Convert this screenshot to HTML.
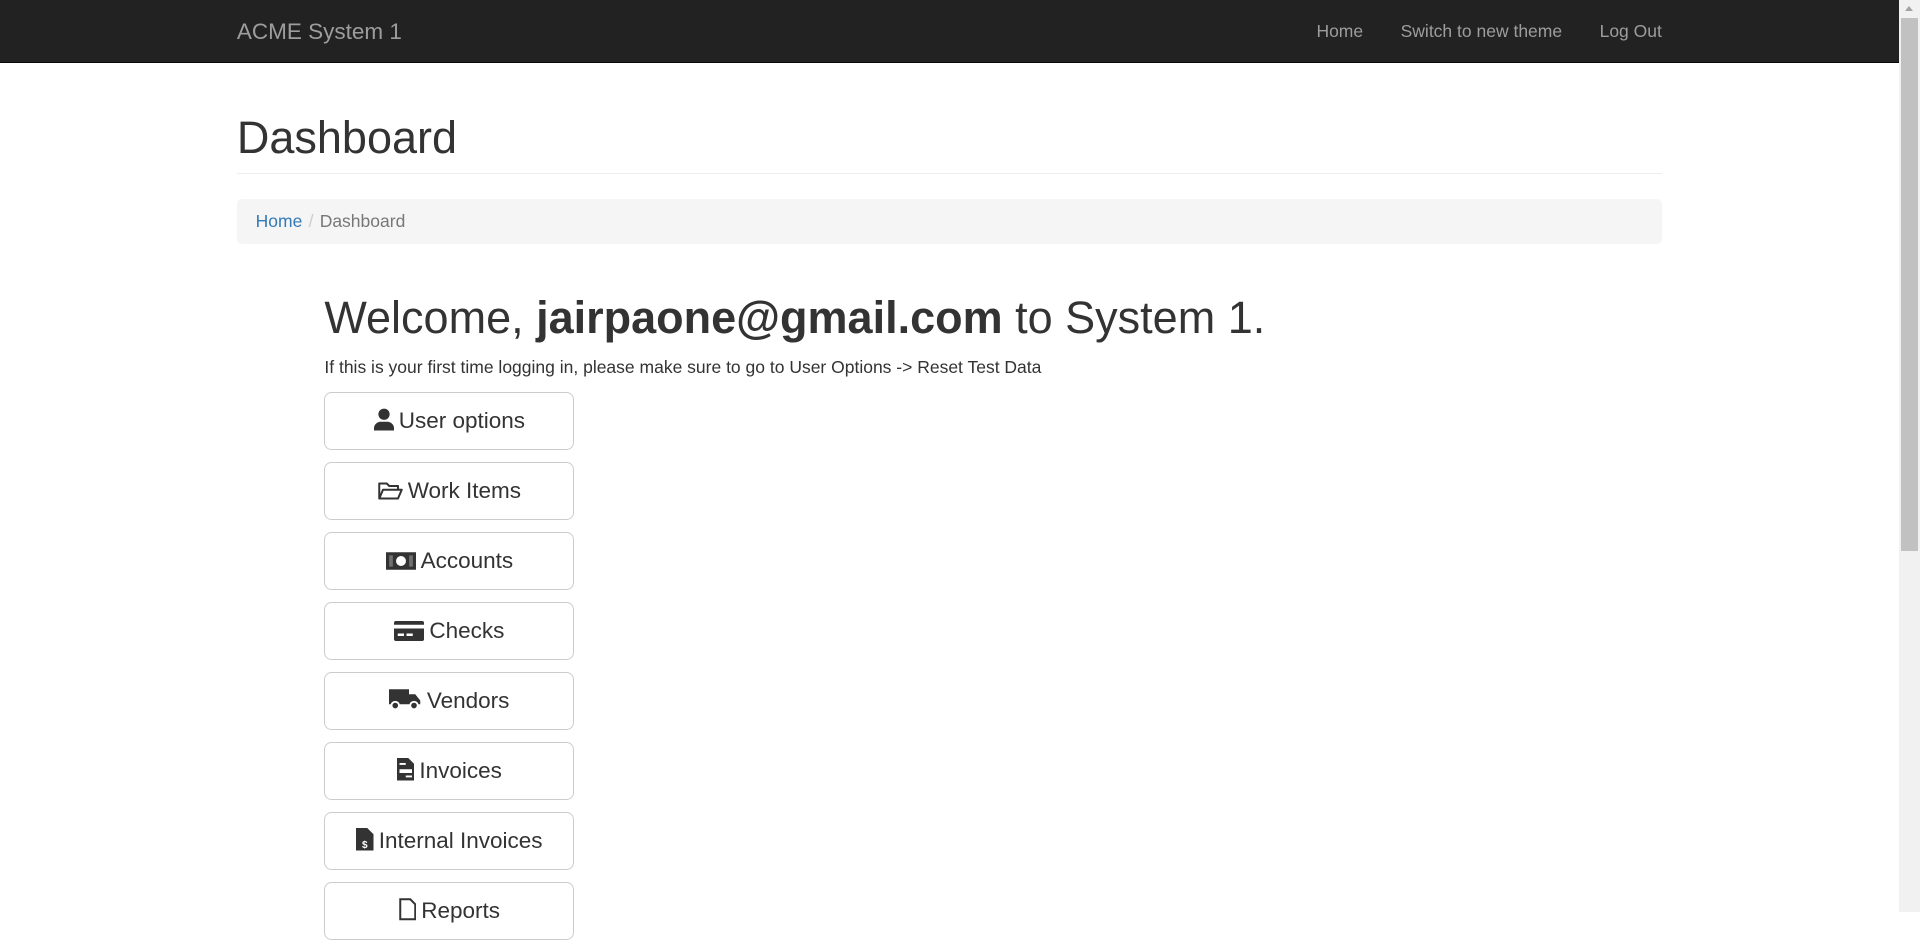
<!DOCTYPE html>
<html><head><meta charset="utf-8"><style>
html{zoom:1.25;overflow:hidden}
body{margin:0;font-family:"Liberation Sans",Arial,sans-serif;font-size:14px;line-height:1.42857;color:#333;background:#fff}
.page{width:1519px;position:relative}
.nav{height:50px;background:#222;border-bottom:1px solid #080808;box-sizing:border-box;position:relative}
.wrap{width:1140px;margin:0 auto;position:relative}
.brand{position:absolute;left:0;top:15px;font-size:18px;line-height:20px;color:#9d9d9d}
.links{position:absolute;right:0;top:15px;line-height:20px;color:#9d9d9d}
.links span{margin-left:30px}
.ph{margin:40px 0 20px;padding-bottom:9px;border-bottom:1px solid #eee}
.ph h1{margin:0;font-size:36px;font-weight:500;line-height:1.1}
.bc{background:#f5f5f5;border-radius:4px;padding:8px 15px;margin-bottom:20px}
.bc a{color:#337ab7}
.bc .s{color:#ccc;padding:0 5px}
.bc .a{color:#777}
.main{margin-left:70px}
.main h1{margin:39px 0 10px;font-size:36px;font-weight:500;line-height:1.1}
.main p{margin:0 0 10px}
.btn{width:200px;height:46px;box-sizing:border-box;border:1px solid #ccc;border-radius:6px;font-size:18px;line-height:44px;text-align:center;margin-bottom:10px;color:#333}
.btn svg{vertical-align:-2px;margin-right:4px}
.sb{position:fixed;left:1519px;top:0;width:17px;height:100%;background:#f1f1f1}
.sb .th{position:absolute;left:2px;right:2px;top:14px;height:427px;background:#c1c1c1}
.sb .ar{position:absolute;left:5px;top:5px;width:0;height:0;border-left:3.5px solid transparent;border-right:3.5px solid transparent;border-bottom:4px solid #a3a3a3}
</style></head><body>
<div class="page">
<div class="nav"><div class="wrap"><div class="brand">ACME System 1</div>
<div class="links"><span>Home</span><span>Switch to new theme</span><span>Log Out</span></div></div></div>
<div class="wrap">
<div class="ph"><h1>Dashboard</h1></div>
<div class="bc"><a>Home</a><span class="s">/</span><span class="a">Dashboard</span></div>
<div class="main">
<h1>Welcome, <b>jairpaone@gmail.com</b> to System 1.</h1>
<p>If this is your first time logging in, please make sure to go to User Options -&gt; Reset Test Data</p>
<div class="btn"><svg width="16" height="18" viewBox="0 0 16 18"><circle cx="8" cy="5" r="4.5" fill="#333"/><path d="M0 18v-2c0-3 3-5 5-5h6c2 0 5 2 5 5v2z" fill="#333"/></svg>User options</div>
<div class="btn"><svg width="20" height="16" viewBox="0 0 20 16"><path d="M1 14V2h6l2 2h7v3M1 14l3-7h15l-3 7z" fill="none" stroke="#333" stroke-width="1.6" stroke-linejoin="round"/></svg>Work Items</div>
<div class="btn"><svg width="24" height="16" viewBox="0 0 24 16"><rect x="0" y="1" width="24" height="14" fill="#333"/><circle cx="12" cy="8" r="4" fill="#fff"/><rect x="2.5" y="3.5" width="3" height="9" fill="#fff" opacity=".3"/><rect x="18.5" y="3.5" width="3" height="9" fill="#fff" opacity=".3"/></svg>Accounts</div>
<div class="btn"><svg width="24" height="16" viewBox="0 0 24 16"><rect x="0" y="0" width="24" height="16" rx="1.5" fill="#333"/><rect x="0" y="3" width="24" height="3" fill="#fff"/><rect x="3" y="10" width="5" height="2" fill="#fff"/><rect x="10" y="10" width="5" height="2" fill="#fff"/></svg>Checks</div>
<div class="btn"><svg width="26" height="18" viewBox="0 0 26 18"><path d="M0 1h16v12H0zM16 5h5l4 5v3h-9z" fill="#333"/><circle cx="5" cy="14" r="3" fill="#333" stroke="#fff" stroke-width="1.5"/><circle cx="20" cy="14" r="3" fill="#333" stroke="#fff" stroke-width="1.5"/></svg>Vendors</div>
<div class="btn"><svg width="14" height="18" viewBox="0 0 14 18"><path d="M0 0h9l5 5v13H0z" fill="#333"/><rect x="2" y="4" width="5" height="1.5" fill="#fff"/><rect x="2" y="9" width="10" height="3" fill="#fff"/><rect x="7" y="14" width="5" height="1.5" fill="#fff"/></svg>Invoices</div>
<div class="btn"><svg width="14" height="18" viewBox="0 0 14 18"><path d="M0 0h9l5 5v13H0z" fill="#333"/><text x="7" y="16" font-size="8" fill="#fff" text-anchor="middle" font-family="Liberation Sans" font-weight="bold">$</text></svg>Internal Invoices</div>
<div class="btn"><svg width="14" height="18" viewBox="0 0 14 18"><path d="M1 1h8l4 4v12H1z" fill="none" stroke="#333" stroke-width="1.6"/></svg>Reports</div>
</div></div></div>
<div class="sb"><div class="ar"></div><div class="th"></div></div>
</body></html>
